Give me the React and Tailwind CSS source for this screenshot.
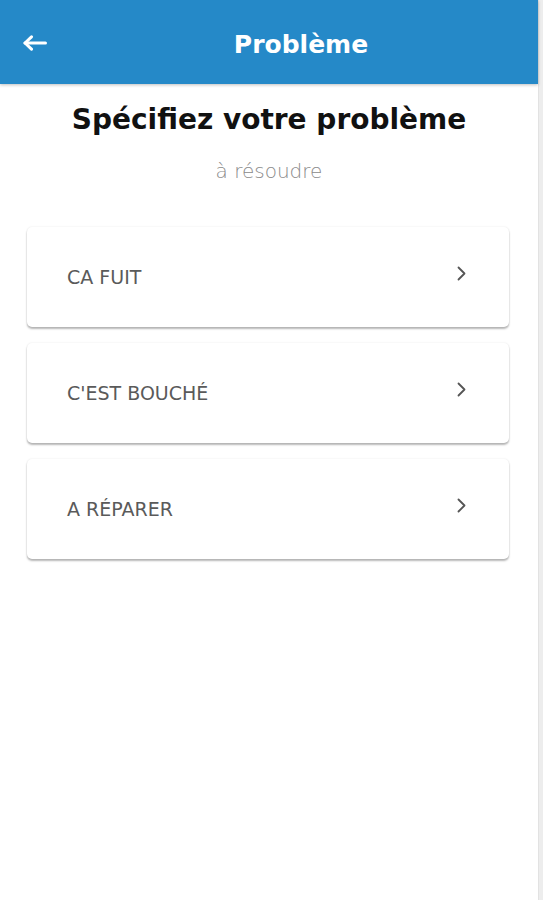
import React from "react";

const items = ["CA FUIT", "C'EST BOUCHÉ", "A RÉPARER"];

function Chevron() {
  return (
    <svg width="9" height="15" viewBox="0 0 9 15" fill="none">
      <path d="M1.5 1.5 L7.5 7.5 L1.5 13.5" stroke="#555" strokeWidth="1.8" strokeLinecap="round" strokeLinejoin="round" />
    </svg>
  );
}

export default function App() {
  return (
    <div className="flex min-h-[900px] w-full bg-white" style={{ fontFamily: '"DejaVu Sans", "Liberation Sans", sans-serif' }}>
      <div className="w-[538px] flex flex-col">
        <header className="h-[84px] bg-[#2589c8] flex items-center shadow-[0_1px_3px_rgba(0,0,0,0.25)] relative z-10">
          <div className="w-16 flex justify-start pl-[23px] mt-[2px]">
            <svg width="24" height="16" viewBox="0 0 24 16" fill="none">
              <path d="M2 8 H22.5" stroke="white" strokeWidth="3" strokeLinecap="round" />
              <path d="M8.5 1.8 L2 8 L8.5 14.2" stroke="white" strokeWidth="3" strokeLinecap="round" strokeLinejoin="round" />
            </svg>
          </div>
          <h1 className="flex-1 text-center text-white text-[25px] font-bold leading-none mt-[4px]">Problème</h1>
        </header>
        <div className="flex flex-col items-center">
          <h2 className="mt-[19px] text-[28px] leading-[34px] font-bold text-[#111]">Spécifiez votre problème</h2>
          <p className="mt-[22px] text-[20px] leading-[24px] font-light text-[#8a8a8a]">à résoudre</p>
        </div>
        <div className="mt-[44px] flex flex-col gap-4 pl-[27px] pr-[29px]">
          {items.map((t) => (
            <div key={t} className="h-[100px] rounded-[5px] bg-white flex items-center justify-between pl-10 pr-[43px] shadow-[0_2px_2px_rgba(0,0,0,0.28),0_0_2px_rgba(0,0,0,0.1)]">
              <span className="text-[19px] leading-[24px] text-[#5a5a5a]">{t}</span>
              <div className="-mt-2"><Chevron /></div>
            </div>
          ))}
        </div>
      </div>
      <div className="flex-1 bg-[#ededed] border-l border-[#e2e2e2]" />
    </div>
  );
}
